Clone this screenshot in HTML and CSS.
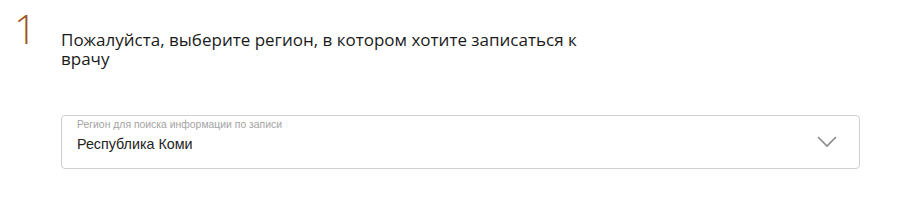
FILE: index.html
```html
<!DOCTYPE html>
<html lang="ru">
<head>
  <meta charset="UTF-8">
  <title>Запись к врачу</title>
  <link rel="stylesheet" href="styles.css">
</head>
<body>
  <div class="step">
    <div class="step-num">1</div>
    <div class="step-body">
      <h2 class="step-title">Пожалуйста, выберите регион, в котором хотите записаться к врачу</h2>
      <div class="select">
        <div class="select-text">
          <span class="select-label">Регион для поиска информации по записи</span>
          <span class="select-value">Республика Коми</span>
        </div>
        <svg class="select-arrow" width="20" height="12" viewBox="0 0 20 12">
          <polyline points="1,1 10,10 19,1" fill="none" stroke="#8a8a8a" stroke-width="1.6"/>
        </svg>
      </div>
    </div>
  </div>
</body>
</html>
```

FILE: styles.css
```css
body {
  margin: 0;
  padding: 0;
  background-color: #fff;
  font-family: "Open Sans", Arial, sans-serif;
}
.step {
  display: flex;
  padding: 9px 0 0 14px;
}
.step-num {
  width: 47px;
  font-family: "Open Sans", sans-serif;
  font-weight: 300;
  font-size: 40px;
  line-height: 40px;
  color: #a0561e;
}
.step-body {
  width: 799px;
  padding-top: 21px;
}
.step-title {
  margin: 0;
  max-width: 540px;
  font-size: 17px;
  font-weight: normal;
  line-height: 19px;
  color: #1a1a1a;
}
.select {
  display: flex;
  align-items: center;
  justify-content: space-between;
  margin-top: 47px;
  height: 52px;
  border: 1px solid #cfcfcf;
  border-radius: 4px;
  padding: 0 22px 0 15px;
}
.select-text {
  display: flex;
  flex-direction: column;
  align-self: flex-start;
  padding-top: 3px;
  font-family: "Liberation Sans", Arial, sans-serif;
}
.select-label {
  font-size: 10.4px;
  line-height: 12px;
  color: #a3a3a3;
  margin-bottom: 5px;
}
.select-value {
  font-size: 14.3px;
  line-height: 17px;
  color: #222;
}
```
